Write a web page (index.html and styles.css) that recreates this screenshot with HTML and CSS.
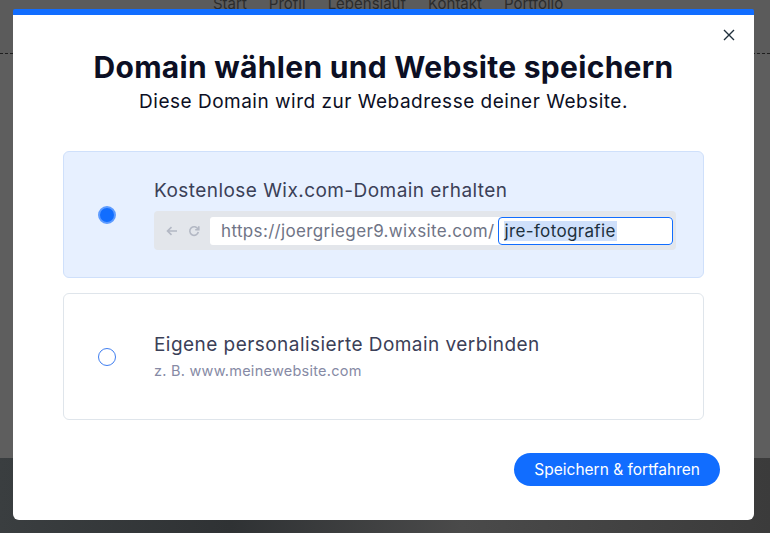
FILE: index.html
```html
<!DOCTYPE html>
<html lang="de">
  <head>
    <meta charset="UTF-8" />
    <title>Domain wählen</title>
    <link rel="stylesheet" href="styles.css">
  </head>
  <body>
    <div class="page">
      <nav class="site-nav">
        <span>Start</span>
        <span>Profil</span>
        <span>Lebenslauf</span>
        <span>Kontakt</span>
        <span>Portfolio</span>
      </nav>
      <div class="divider"></div>
      <div class="page-body"></div>
      <div class="photo"></div>
    </div>

    <div class="modal">
      <button class="close" aria-label="Schließen">
        <svg width="12" height="12" viewBox="0 0 12 12">
          <path d="M1 1 L11 11 M11 1 L1 11" stroke="#20303c" stroke-width="1.4" fill="none" />
        </svg>
      </button>

      <h1>Domain wählen und Website speichern</h1>
      <p class="subtitle">Diese Domain wird zur Webadresse deiner Website.</p>

      <div class="option selected">
        <span class="radio checked"></span>
        <div class="option-body">
          <div class="option-title">Kostenlose Wix.com-Domain erhalten</div>
          <div class="urlbar">
            <span class="nav-icons">
              <svg width="12" height="10" viewBox="0 0 12 10">
                <path d="M11 5 H2 M5.5 1.2 L1.5 5 L5.5 8.8" stroke="#b3b8c4" stroke-width="1.6" fill="none" />
              </svg>
              <svg width="12" height="12" viewBox="0 0 12 12">
                <path d="M10 4.2 A4.3 4.3 0 1 0 10.3 7" stroke="#b3b8c4" stroke-width="1.6" fill="none" />
                <path d="M10.8 1.2 V4.8 H7.2" stroke="#b3b8c4" stroke-width="1.6" fill="none" />
              </svg>
            </span>
            <div class="url-field">
              <span class="url-base">https://joergrieger9.wixsite.com/</span>
              <span class="url-input"><span class="sel">jre-fotografie</span></span>
            </div>
          </div>
        </div>
      </div>

      <div class="option">
        <span class="radio"></span>
        <div class="option-body">
          <div class="option-title">Eigene personalisierte Domain verbinden</div>
          <div class="hint">z. B. www.meinewebsite.com</div>
        </div>
      </div>

      <div class="actions">
        <button class="primary">Speichern &amp; fortfahren</button>
      </div>
    </div>
  </body>
</html>
```

FILE: styles.css
```css
body {
  margin: 0;
  font-family: Inter, "Open Sans", sans-serif;
  background: #5b5b5b;
  overflow: hidden;
}
.page {
  height: 533px;
  display: flex;
  flex-direction: column;
}
.site-nav {
  display: flex;
  gap: 22px;
  padding-left: 213px;
  margin-top: -6px;
  height: 20px;
  font-size: 15px;
  line-height: 20px;
  color: #2b2b2b;
}
.divider {
  margin-top: 39px;
  border-top: 1px dashed #1e1e1e;
}
.page-body {
  height: 404px;
  background: #5e5e5e;
}
.photo {
  flex: 1;
  background: linear-gradient(90deg, #3a3e40 0%, #2f3234 30%, #4a4a4a 60%, #3b3b3b 100%);
}

.modal {
  position: absolute;
  left: 13px;
  top: 9px;
  width: 741px;
  height: 511px;
  background: white;
  border-top: 6px solid #116dff;
  border-radius: 2px 2px 6px 6px;
  padding: 0 50px;
  box-sizing: border-box;
  display: flex;
  flex-direction: column;
}
.close {
  position: absolute;
  right: 19px;
  top: 14px;
  border: none;
  background: none;
  padding: 0;
  width: 12px;
  height: 12px;
  cursor: pointer;
}
h1 {
  margin: 34px 0 0;
  text-align: center;
  font-size: 30px;
  line-height: 36px;
  letter-spacing: 0.3px;
  font-weight: 700;
  color: #0c0f24;
}
.subtitle {
  margin: 5px 0 0;
  text-align: center;
  font-size: 19px;
  line-height: 24px;
  letter-spacing: 0.5px;
  color: #0c0f24;
}
.option {
  margin-top: 15px;
  height: 127px;
  box-sizing: border-box;
  border: 1px solid #dfe5eb;
  border-radius: 6px;
  display: flex;
  align-items: center;
  padding-left: 34px;
  gap: 38px;
}
.option.selected {
  margin-top: 37px;
  background: #e7f0ff;
  border-color: #cfe0fb;
}
.radio {
  width: 18px;
  height: 18px;
  box-sizing: border-box;
  border-radius: 50%;
  border: 1.5px solid #3f7ef0;
  background: white;
  flex-shrink: 0;
}
.radio.checked {
  background: #116dff;
  border: 2px solid #5d9bff;
}
.option-body {
  display: flex;
  flex-direction: column;
}
.option-title {
  font-size: 19px;
  line-height: 24px;
  letter-spacing: 0.45px;
  color: #3b4057;
}
.hint {
  margin-top: 4px;
  font-size: 14.5px;
  line-height: 20px;
  letter-spacing: 0.25px;
  color: #868aa5;
}
.urlbar {
  margin-top: 8px;
  width: 522px;
  height: 39px;
  box-sizing: border-box;
  background: #e3e6eb;
  border-radius: 4px;
  display: flex;
  align-items: center;
  padding: 0 3px 0 12px;
}
.nav-icons {
  display: flex;
  align-items: center;
  gap: 10px;
  width: 44px;
}
.url-field {
  flex: 1;
  height: 28px;
  background: white;
  border-radius: 3px;
  display: flex;
  align-items: center;
  padding-left: 11px;
  font-size: 17px;
  letter-spacing: 0.35px;
  color: #6f7486;
}
.url-base {
  margin-right: 3px;
}
.url-input {
  flex: 1;
  height: 28px;
  box-sizing: border-box;
  border: 1.5px solid #116dff;
  border-radius: 4px;
  display: flex;
  align-items: center;
  padding-left: 5px;
  color: #20303c;
}
.sel {
  background: #cfe0fb;
  padding: 0 1px;
}
.actions {
  margin-top: auto;
  margin-bottom: 34px;
  display: flex;
  justify-content: flex-end;
  margin-right: -16px;
}
.primary {
  height: 33px;
  padding: 0 20px;
  border: none;
  border-radius: 17px;
  background: #116dff;
  color: white;
  font-family: inherit;
  font-size: 15.5px;
  cursor: pointer;
}
```
